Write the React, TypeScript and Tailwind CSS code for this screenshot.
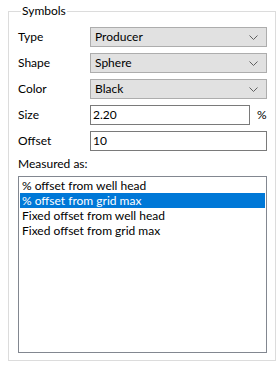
import React from "react";

function Chevron() {
  return (
    <svg width="9" height="5" viewBox="0 0 9 5" className="shrink-0">
      <path d="M0.5 0.5 L4.5 4.5 L8.5 0.5" fill="none" stroke="#606060" strokeWidth="1" />
    </svg>
  );
}

function Combo({ value }: { value: string }) {
  return (
    <div className="w-[177px] h-[20px] border border-[#adadad] bg-[#e1e1e1] flex items-center pl-[4px] pr-[8px] justify-between">
      <span className="leading-[16px]">{value}</span>
      <Chevron />
    </div>
  );
}

export default function App() {
  const items = [
    "% offset from well head",
    "% offset from grid max",
    "Fixed offset from well head",
    "Fixed offset from grid max",
  ];
  return (
    <div className="w-[280px] h-[365px] bg-white pl-[8px] pt-[3px] font-['Lato','Noto_Sans',sans-serif] text-[12px] text-black">
      <fieldset className="w-[268px] h-[358px] border border-[#dcdcdc] pl-[9px] pr-[8px]">
        <legend className="ml-[3px] px-[1px] leading-[16px]">Symbols</legend>
        <div className="flex flex-col gap-[6px] mt-[8px]">
          <div className="flex items-center">
            <span className="w-[72px]">Type</span>
            <Combo value="Producer" />
          </div>
          <div className="flex items-center">
            <span className="w-[72px]">Shape</span>
            <Combo value="Sphere" />
          </div>
          <div className="flex items-center">
            <span className="w-[72px]">Color</span>
            <Combo value="Black" />
          </div>
          <div className="flex items-center">
            <span className="w-[72px]">Size</span>
            <div className="w-[160px] h-[20px] border border-[#7a7a7a] flex items-center pl-[2px]">2.20</div>
            <span className="ml-[7px]">%</span>
          </div>
          <div className="flex items-center">
            <span className="w-[72px]">Offset</span>
            <div className="w-[177px] h-[20px] border border-[#7a7a7a] flex items-center pl-[2px]">10</div>
          </div>
        </div>
        <div className="mt-[5px] leading-[16px]">Measured as:</div>
        <div className="mt-[4px] w-[249px] h-[177px] border border-[#828790] pt-[1px] px-[1px]">
          {items.map((t, i) => (
            <div
              key={t}
              className={
                i === 1
                  ? "h-[15px] leading-[15px] pl-[2px] bg-[#0078d7] text-white"
                  : "h-[15px] leading-[15px] pl-[2px]"
              }
            >
              {t}
            </div>
          ))}
        </div>
      </fieldset>
    </div>
  );
}
